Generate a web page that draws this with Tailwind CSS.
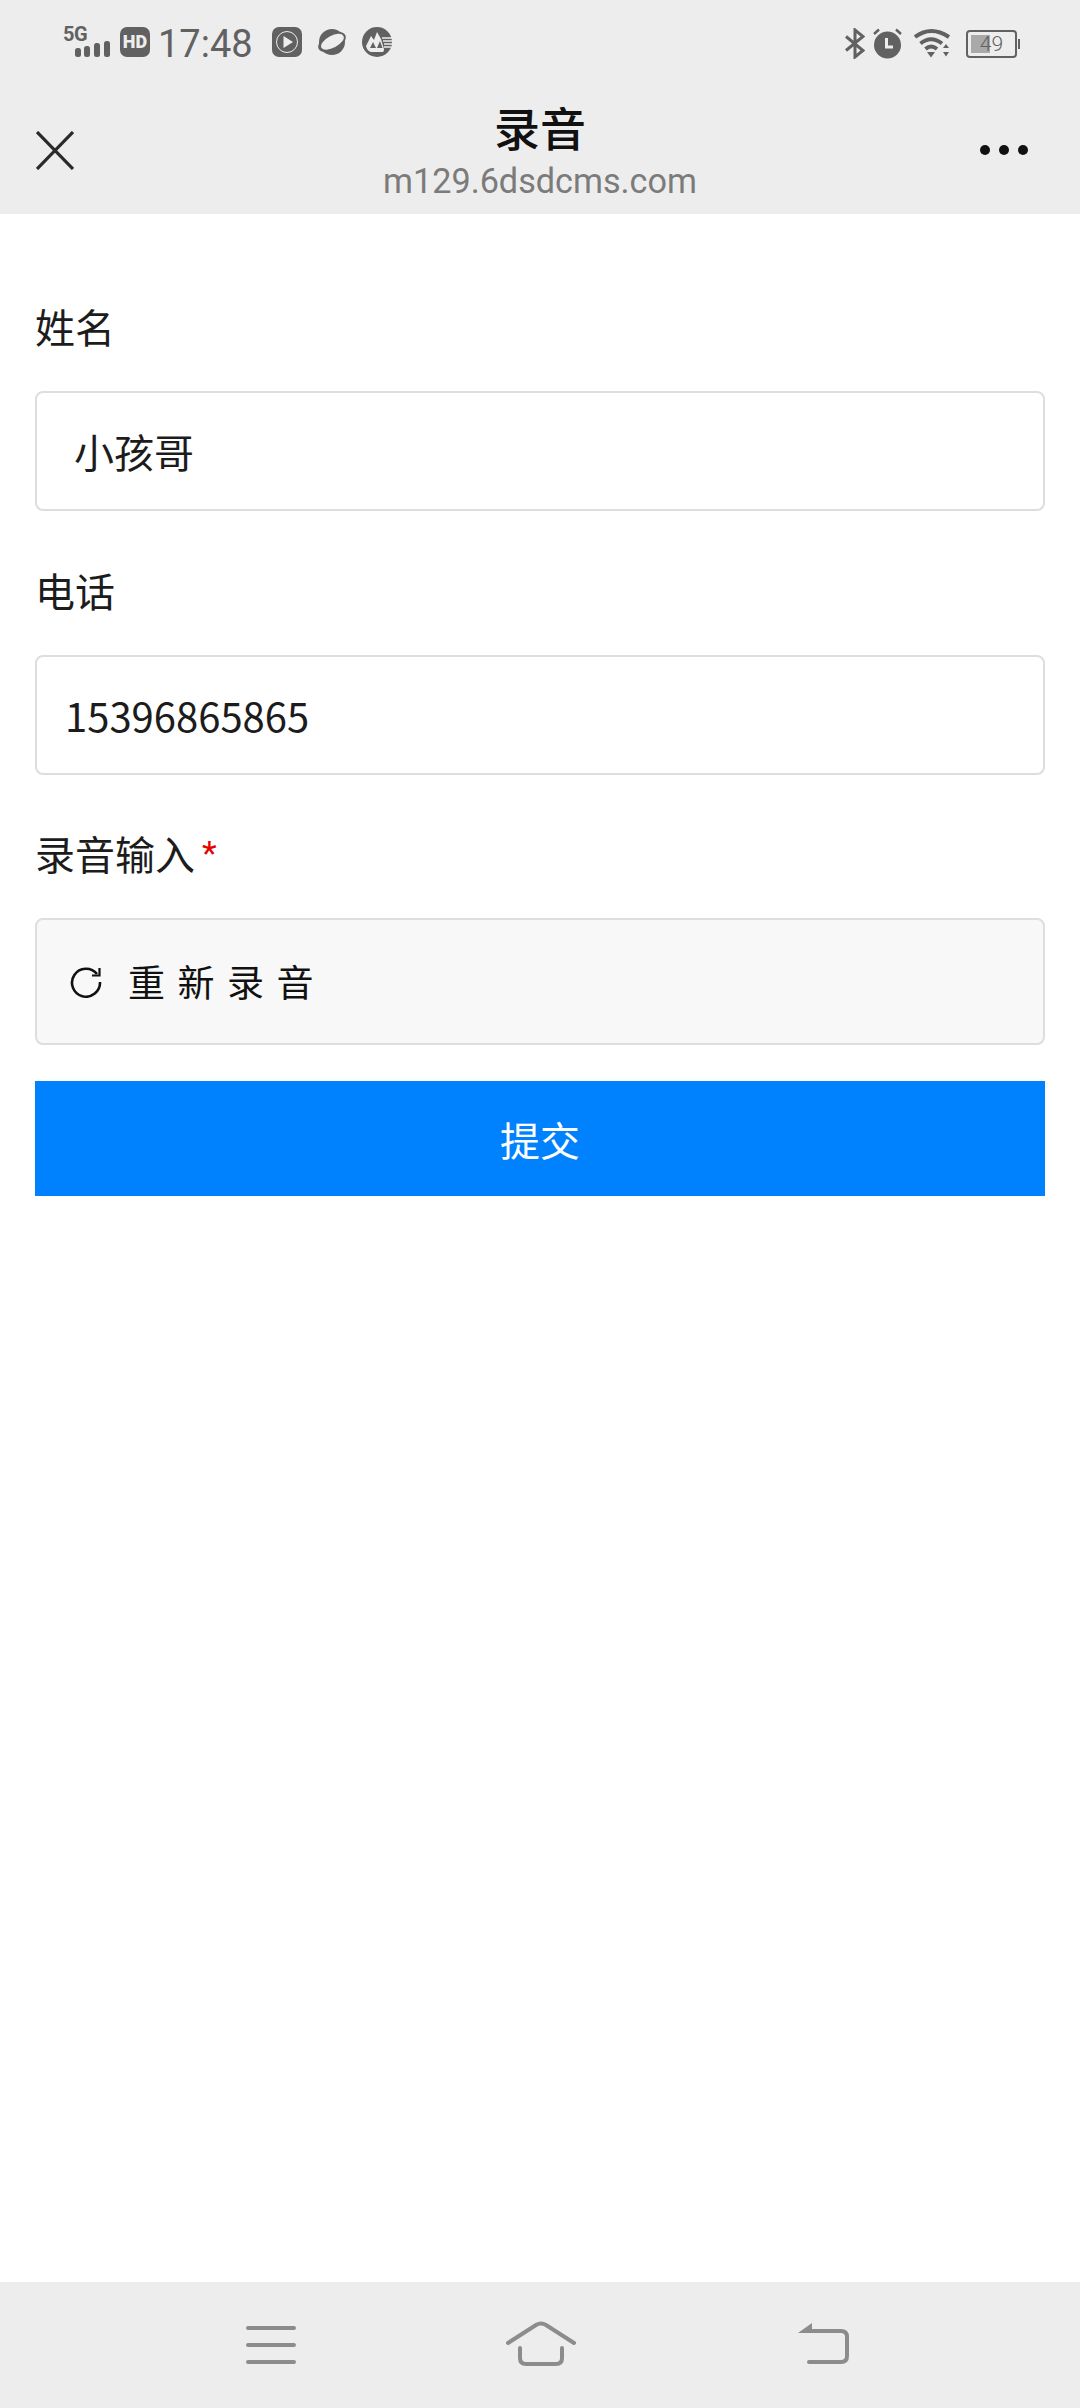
<!DOCTYPE html>
<html lang="zh-CN">
<head>
    <meta charset="UTF-8">
    <meta name="viewport" content="width=device-width, initial-scale=1.0">
    <title>录音</title>
    <script src="https://cdn.jsdelivr.net/npm/@tailwindcss/browser@4"></script>
</head>
<body class="bg-white">
<div class="w-[1080px] h-[2408px] flex flex-col font-['Noto_Sans_CJK_SC','Noto_Sans',sans-serif] text-[#1c1c1c] overflow-hidden">

    <!-- Status bar + title bar -->
    <header class="h-[214px] bg-[#ededed] shrink-0 flex flex-col">
        <div class="h-[86px] pt-[27px] pl-[63px] pr-[60px] flex justify-between items-start text-[#616161]">
            <div class="flex items-start">
                <!-- signal -->
                <div class="relative w-[48px] h-[30px]">
                    <span class="absolute left-0 top-[1px] text-[20px] leading-[13px] font-bold font-['Roboto',sans-serif] tracking-[-0.5px]">5G</span>
                    <svg class="absolute left-[12px] top-[13px]" width="36" height="18" viewBox="0 0 36 18" fill="#616161">
                        <rect x="0" y="8" width="6" height="9" rx="2.5"/>
                        <rect x="9" y="6" width="6" height="11" rx="2.5"/>
                        <rect x="19" y="3" width="6" height="14" rx="2.5"/>
                        <rect x="29" y="1" width="6" height="16" rx="2.5"/>
                    </svg>
                </div>
                <div class="ml-[9px] w-[30px] h-[30px] rounded-[7px] bg-[#616161] flex items-center justify-center text-[#ededed] text-[18px] font-black font-['Roboto',sans-serif] leading-none">HD</div>
                <div class="ml-[8px] text-[38px] leading-[34px] font-normal font-['Roboto',sans-serif] w-[94px]">17:48</div>
                <!-- notification icons -->
                <svg class="ml-[20px]" width="30" height="30" viewBox="0 0 30 30">
                    <rect width="30" height="30" rx="7" fill="#616161"/>
                    <circle cx="15" cy="15" r="10.5" fill="none" stroke="#ededed" stroke-width="1"/>
                    <path d="M11.5 9 L21 15 L11.5 21 Z" fill="#ededed"/>
                </svg>
                <svg class="ml-[15px]" width="30" height="30" viewBox="0 0 30 30">
                    <circle cx="15" cy="15" r="13" fill="#616161"/>
                    <g transform="rotate(-28 15 15)">
                        <ellipse cx="15" cy="15" rx="15" ry="8" fill="#616161"/>
                        <ellipse cx="15.5" cy="15" rx="12.5" ry="6" fill="#ededed"/>
                    </g>
                </svg>
                <svg class="ml-[15px]" width="30" height="30" viewBox="0 0 30 30">
                    <circle cx="15" cy="15" r="15" fill="#616161"/>
                    <path d="M4 19 L9 9 L12 13 L15 5 L19 12 L21 19 Q23 23 21 25 H9 Q5 24 4 19 Z" fill="#ededed"/>
                    <path d="M8 21 L11 15 L14 21 Z M15 21 L18 14 L20.5 21 Z" fill="#616161"/>
                    <path d="M20 11 H30 M21 14 H30 M22 17 H30 M22 20 H29" stroke="#ededed" stroke-width="1.4"/>
                </svg>
            </div>
            <div class="flex items-start mt-[1px]">
                <svg width="20" height="31" viewBox="0 0 20 31" fill="none" stroke="#616161" stroke-width="3">
                    <path d="M1 8.5 L18 22.5 L10 29 V2 L18 8.5 L1 22.5"/>
                </svg>
                <svg class="ml-[7px]" width="31" height="31" viewBox="0 0 31 31">
                    <circle cx="15.5" cy="17" r="13.5" fill="#616161"/>
                    <path d="M14.5 10 V19 H21" fill="none" stroke="#ededed" stroke-width="3"/>
                    <path d="M2 6 L7 1.5 M24 1.5 L29 6" stroke="#616161" stroke-width="2.5"/>
                </svg>
                <svg class="ml-[11px]" width="37" height="31" viewBox="0 0 37 31" fill="none" stroke="#616161" stroke-width="4">
                    <path d="M1 9 Q17 -3 35 9"/>
                    <path d="M6.5 15.5 Q17 7 28 15.5"/>
                    <path d="M11.5 21 Q17 16 23 21"/>
                    <path d="M13 24 L17 29.5 L21 24 Z" fill="#616161" stroke="none"/>
                    <path d="M29 20 L32 16 L35 20 Z M29 24 L32 28.5 L35 24 Z" fill="#616161" stroke="none"/>
                </svg>
                <div class="ml-[15px] mt-[2px] flex items-center">
                    <div class="relative w-[51px] h-[28px] rounded-[4px] border-[2px] border-[#616161] p-[3px] overflow-hidden">
                        <div class="w-[47%] h-full bg-[#a9a9a9]"></div>
                        <span class="absolute inset-0 flex items-center justify-center text-[21px] leading-none font-light font-['Roboto',sans-serif]">49</span>
                    </div>
                    <div class="ml-[1px] w-[2px] h-[10px] bg-[#616161]"></div>
                </div>
            </div>
        </div>
        <div class="relative flex-1 flex flex-col items-center">
            <div class="text-[46px] leading-[50px] font-medium text-[#111] mt-[15px]">录音</div>
            <div class="text-[34.2px] leading-[42px] font-['Roboto',sans-serif] text-[#7b7b7b] mt-[9px]">m129.6dsdcms.com</div>
            <svg class="absolute left-[36px] top-[49px] mt-[-4px]" width="38" height="39" viewBox="0 0 38 39" stroke="#2a2a2a" stroke-width="3.2">
                <path d="M1 1 L37 38 M37 1 L1 38"/>
            </svg>
            <div class="absolute right-[52px] top-[59px] flex gap-[9px]">
                <span class="w-[10px] h-[10px] rounded-full bg-[#111]"></span>
                <span class="w-[10px] h-[10px] rounded-full bg-[#111]"></span>
                <span class="w-[10px] h-[10px] rounded-full bg-[#111]"></span>
            </div>
        </div>
    </header>

    <!-- Form -->
    <main class="flex-1 px-[35px] pt-[83px] text-[40px]">
        <div class="leading-[58px]">姓名</div>
        <div class="mt-[36px] h-[120px] rounded-[8px] border-[2px] border-[#dedede] pl-[37px] flex items-center">小孩哥</div>
        <div class="mt-[50px] leading-[58px]">电话</div>
        <div class="mt-[36px] h-[120px] rounded-[8px] border-[2px] border-[#dedede] pl-[28px] flex items-center">15396865865</div>
        <div class="mt-[49px] leading-[58px] flex">录音输入<span class="text-[#e60000] text-[34px] ml-[7px] font-['Roboto',sans-serif]">*</span></div>
        <div class="mt-[36px] h-[127px] rounded-[8px] border-[2px] border-[#dedede] bg-[#f8f8f8] pl-[33px] flex items-center">
            <svg width="32" height="32" viewBox="0 0 32 32" fill="none" stroke="#111" stroke-width="2.6">
                <path d="M27 8 A14 14 0 1 0 30 16"/>
                <path d="M29.5 2 V9.5 H22" stroke-width="2.2"/>
            </svg>
            <span class="ml-[26px] text-[37px] tracking-[12.5px] text-[#111]">重新录音</span>
        </div>
        <button class="mt-[36px] w-full h-[115px] bg-[#0082ff] text-white text-[40px]">提交</button>
    </main>

    <!-- Navigation bar -->
    <nav class="h-[126px] bg-[#ededed] shrink-0 pl-[246px] pt-[39px] flex items-start">
        <svg class="mt-[5px]" width="50" height="38" viewBox="0 0 50 38" fill="none" stroke="#8c8c8c" stroke-width="4" stroke-linecap="round">
            <path d="M2 2 H48 M2 19 H48 M2 36 H48"/>
        </svg>
        <svg class="ml-[210px]" width="70" height="46" viewBox="0 0 70 46" fill="none" stroke="#8c8c8c" stroke-width="4" stroke-linecap="round" stroke-linejoin="round">
            <path d="M2 22 L30 4 Q35 1 40 4 L68 22"/>
            <path d="M14 27 V37 Q14 43 20 43 H50 Q56 43 56 37 V27"/>
        </svg>
        <svg class="ml-[222px]" width="52" height="46" viewBox="0 0 52 46" fill="none" stroke="#8c8c8c" stroke-width="4" stroke-linecap="round">
            <path d="M12 10 H43 Q49 10 49 16 V35 Q49 41 43 41 H11"/>
            <path d="M0 12 L14 2 V12 Z" fill="#8c8c8c" stroke="none"/>
        </svg>
    </nav>
</div>
</body>
</html>
